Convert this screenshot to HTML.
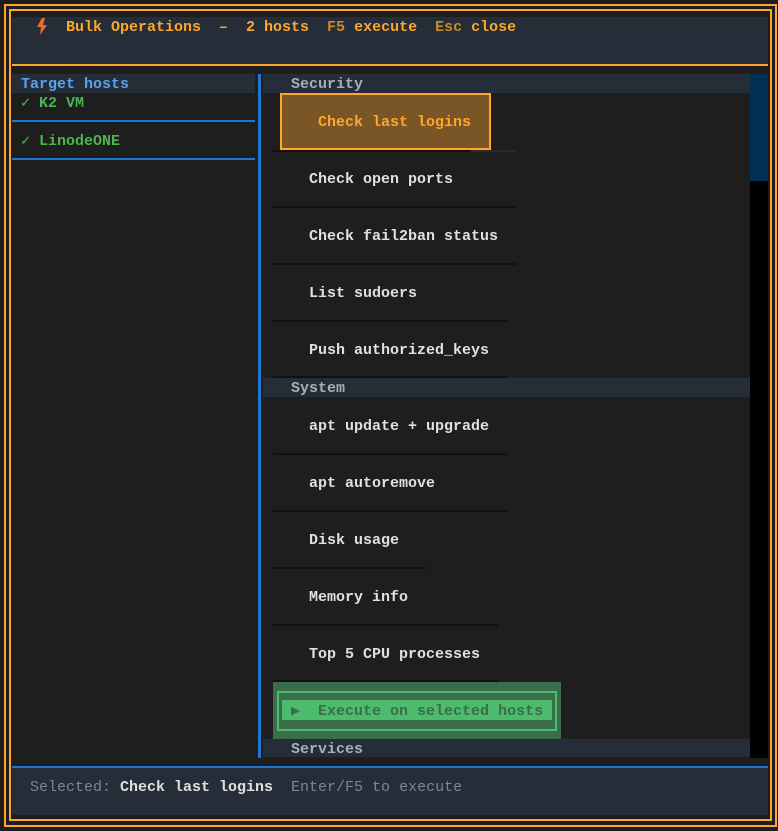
<!DOCTYPE html>
<html><head><meta charset="utf-8"><style>
*{margin:0;padding:0;box-sizing:border-box}
body{width:778px;height:831px;background:#1e1e1e;position:relative;overflow:hidden;font-family:"Liberation Mono","DejaVu Sans Mono",monospace;font-size:15px;font-weight:bold;line-height:19px}
div{position:absolute}
.t{white-space:pre;margin-top:1px}
.sec{left:263px;width:487px;height:19px;background:#252d38;color:#a8afb8}
</style></head><body>
<div style="left:4px;top:4px;width:773px;height:823px;border:2px solid #ffa62b"></div>
<div style="left:9px;top:9px;width:763px;height:812px;border:2px solid #ffa62b"></div>
<div style="left:12px;top:17px;width:756px;height:47px;background:#252d38"></div>
<div style="left:12px;top:64px;width:756px;height:2px;background:#ffa62b"></div>
<svg style="position:absolute;left:36px;top:18px" width="12" height="17" viewBox="0 0 12 17"><path d="M6 0 L1 9 L5 9 L4 17 L11 7 L7 7 L9 0 Z" fill="#f06a2a"/></svg>
<div class="t" style="left:66px;top:17px;color:#ffa62b">Bulk Operations  –  2 hosts  <span style="color:#c88a2e">F5</span> execute  <span style="color:#c88a2e">Esc</span> close</div>
<div style="left:12px;top:74px;width:243px;height:19px;background:#252d38"></div>
<div class="t" style="left:21px;top:74px;color:#5aa2f0">Target hosts</div>
<div class="t" style="left:21px;top:93px;color:#4ab54f">✓ K2 VM</div>
<div style="left:12px;top:120px;width:243px;height:2px;background:#1c78d0"></div>
<div class="t" style="left:21px;top:131px;color:#4ab54f">✓ LinodeONE</div>
<div style="left:12px;top:158px;width:243px;height:2px;background:#1c78d0"></div>
<div style="left:258px;top:74px;width:3px;height:684px;background:#1c78d0"></div>
<div style="left:750px;top:74px;width:18px;height:684px;background:#000"></div>
<div style="left:750px;top:74px;width:18px;height:107px;background:#003054"></div>
<div class="sec" style="top:74px"><div class="t" style="left:28px;top:0">Security</div></div>
<div class="sec" style="top:378px"><div class="t" style="left:28px;top:0">System</div></div>
<div class="sec" style="top:739px;height:18px"><div class="t" style="left:28px;top:0">Services</div></div>
<div style="left:280px;top:93px;width:211px;height:57px;background:#7a5526;border:2px solid #ffa62b"></div>
<div class="t" style="left:318px;top:112px;color:#ffa62b">Check last logins</div>
<div style="left:273px;top:150px;width:243px;height:2px;background:#2a2a2a"></div>
<div style="left:273px;top:150px;width:198px;height:2px;background:#111"></div>
<div class="t" style="left:309px;top:169px;color:#e0e0e0">Check open ports</div>
<div style="left:273px;top:206px;width:243px;height:2px;background:#111"></div>
<div class="t" style="left:309px;top:226px;color:#e0e0e0">Check fail2ban status</div>
<div style="left:273px;top:263px;width:243px;height:2px;background:#111"></div>
<div class="t" style="left:309px;top:283px;color:#e0e0e0">List sudoers</div>
<div style="left:273px;top:320px;width:234px;height:2px;background:#111"></div>
<div class="t" style="left:309px;top:340px;color:#e0e0e0">Push authorized_keys</div>
<div style="left:273px;top:376px;width:234px;height:2px;background:#111"></div>
<div class="t" style="left:309px;top:416px;color:#e0e0e0">apt update + upgrade</div>
<div style="left:273px;top:453px;width:234px;height:2px;background:#111"></div>
<div class="t" style="left:309px;top:473px;color:#e0e0e0">apt autoremove</div>
<div style="left:273px;top:510px;width:234px;height:2px;background:#111"></div>
<div class="t" style="left:309px;top:530px;color:#e0e0e0">Disk usage</div>
<div style="left:273px;top:567px;width:153px;height:2px;background:#111"></div>
<div class="t" style="left:309px;top:587px;color:#e0e0e0">Memory info</div>
<div style="left:273px;top:624px;width:225px;height:2px;background:#111"></div>
<div class="t" style="left:309px;top:644px;color:#e0e0e0">Top 5 CPU processes</div>
<div style="left:273px;top:680px;width:225px;height:2px;background:#111"></div>
<div style="left:273px;top:682px;width:288px;height:57px;background:#3a6e4a"></div>
<div style="left:277px;top:691px;width:280px;height:40px;border:2px solid #4cbb6c"></div>
<div style="left:282px;top:700px;width:270px;height:20px;background:#4cbb6c"></div>
<div class="t" style="left:291px;top:701px;color:#3a6e4a">▶  Execute on selected hosts</div>
<div style="left:12px;top:766px;width:756px;height:2px;background:#1c78d0"></div>
<div style="left:12px;top:768px;width:756px;height:47px;background:#252d38"></div>
<div class="t" style="left:30px;top:777px;color:#e0e0e0"><span style="color:#7d858f;font-weight:normal">Selected: </span>Check last logins  <span style="color:#7d858f;font-weight:normal">Enter/F5 to execute</span></div>
</body></html>
